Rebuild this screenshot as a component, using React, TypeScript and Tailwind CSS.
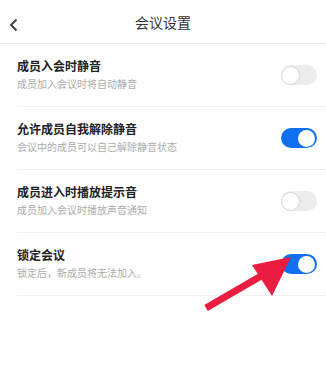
import React from "react";

// Settings rows
const rows = [
  { title: "成员入会时静音", desc: "成员加入会议时将自动静音", on: false },
  { title: "允许成员自我解除静音", desc: "会议中的成员可以自己解除静音状态", on: true },
  { title: "成员进入时播放提示音", desc: "成员加入会议时播放声音通知", on: false },
  { title: "锁定会议", desc: "锁定后，新成员将无法加入。", on: true },
];

const Toggle: React.FC<{ on: boolean }> = ({ on }) => (
  <div
    className={
      on
        ? "w-[36px] h-[20px] rounded-full bg-[#1170f0] flex items-center justify-end p-[2px]"
        : "w-[36px] h-[20px] rounded-full bg-[#ebecee] flex items-center justify-start"
    }
  >
    <div
      className={
        on
          ? "w-[17px] h-[17px] rounded-full bg-white"
          : "w-[19px] h-[19px] rounded-full bg-white border border-[#d6d6d6]"
      }
    />
  </div>
);

export default function App() {
  return (
    <div
      className="relative w-[326px] h-[386px] bg-white overflow-hidden"
      style={{ fontFamily: '"Noto Sans CJK SC", "Noto Sans", sans-serif' }}
    >
      {/* Header */}
      <div className="relative h-[44px] flex items-center justify-center border-b border-[#e6e6e6]">
        <svg
          className="absolute left-[9px] top-[18px]"
          width="10"
          height="14"
          viewBox="0 0 10 14"
          fill="none"
        >
          <path d="M7.5 1.5 L2 7 L7.5 12.5" stroke="#444" strokeWidth="2" />
        </svg>
        <p className="text-[14px] text-[#333] leading-none">会议设置</p>
      </div>

      {/* Rows */}
      <div className="pl-[17px]">
        {rows.map((r) => (
          <div
            key={r.title}
            className="h-[63px] flex items-center border-b border-[#f0f0f0] pr-[9px]"
          >
            <div className="flex-1 flex flex-col gap-[5px] -mt-[1px]">
              <p className="text-[12px] font-bold text-[#222] leading-[14px]">{r.title}</p>
              <p className="text-[10px] text-[#ababab] leading-[12px]">{r.desc}</p>
            </div>
            <Toggle on={r.on} />
          </div>
        ))}
      </div>

      {/* Arrow annotation */}
      <svg className="absolute left-0 top-0" width="326" height="386" viewBox="0 0 326 386">
        <line x1="206" y1="308" x2="268" y2="272" stroke="#ea1c40" strokeWidth="7" />
        <polygon points="291,257 252,265 272,296" fill="#ea1c40" />
      </svg>
    </div>
  );
}
